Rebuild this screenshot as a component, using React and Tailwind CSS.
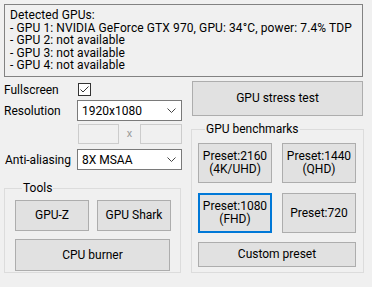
import React from "react";

function Btn({ className = "", focused = false, children }) {
  return (
    <div
      className={`flex flex-col items-center justify-center whitespace-nowrap bg-[#e1e1e1] text-center leading-[13px] ${
        focused ? "border-2 border-[#0078d7]" : "border border-[#adadad]"
      } ${className}`}
    >
      {children}
    </div>
  );
}

function Chevron() {
  return (
    <svg width="9" height="6" viewBox="0 0 9 6" className="ml-auto mr-[5px]">
      <path d="M0.5 0.5 L4.5 4.5 L8.5 0.5" fill="none" stroke="#444" strokeWidth="1" />
    </svg>
  );
}

function Select({ value }) {
  return (
    <div className="flex h-[21px] w-[105px] items-center border border-[#7a7a7a] bg-white pl-[4px]">
      <span>{value}</span>
      <Chevron />
    </div>
  );
}

function Group({ title, className = "", children }) {
  return (
    <fieldset className={`border border-[#dcdcdc] ${className}`}>
      <legend className="ml-[7px] px-[1px] leading-[16px]">{title}</legend>
      {children}
    </fieldset>
  );
}

export default function App() {
  return (
    <div className="h-[287px] w-[372px] overflow-hidden whitespace-nowrap bg-[#f0f0f0] pt-[4px] font-['Roboto',sans-serif] text-[12px] text-black">
      <div className="ml-[4px] h-[73px] w-[359px] border border-[#828282] pl-[5px] pt-[4px] leading-[12.6px] tracking-[0.1px]">
        <div>Detected GPUs:</div>
        <div>- GPU 1: NVIDIA GeForce GTX 970, GPU: 34°C, power: 7.4% TDP</div>
        <div>- GPU 2: not available</div>
        <div>- GPU 3: not available</div>
        <div>- GPU 4: not available</div>
      </div>

      <div className="ml-[4px] flex">
        <div className="w-[178px]">
          <div className="mt-[3px] flex h-[19px] items-center">
            <span className="w-[74px]">Fullscreen</span>
            <div className="flex h-[13px] w-[13px] items-center justify-center border border-[#333] bg-white">
              <svg width="11" height="11" viewBox="0 0 11 11">
                <path d="M1.5 5.5 L4 8 L9.5 2.5" fill="none" stroke="#333" strokeWidth="1" />
              </svg>
            </div>
          </div>
          <div className="mt-[1px] flex items-center">
            <span className="w-[73px]">Resolution</span>
            <Select value="1920x1080" />
          </div>
          <div className="mt-[3px] flex h-[20px] items-center pl-[74px]">
            <div className="h-[20px] w-[41px] border border-[#cccccc]" />
            <span className="w-[22px] text-center text-[11px] text-[#9a9a9a]">x</span>
            <div className="h-[20px] w-[42px] border border-[#cccccc]" />
          </div>
          <div className="mt-[5px] flex items-center">
            <span className="w-[73px] pl-[1px]">Anti-aliasing</span>
            <Select value="8X MSAA" />
          </div>
          <Group title="Tools" className="mt-[10px] h-[93px] w-[177px] pl-[10px]">
            <div className="mt-[4px] flex gap-[8px]">
              <Btn className="h-[31px] w-[74px]">GPU-Z</Btn>
              <Btn className="h-[31px] w-[74px]">GPU Shark</Btn>
            </div>
            <Btn className="mt-[8px] h-[32px] w-[155px]">CPU burner</Btn>
          </Group>
        </div>

        <div className="ml-[9px] w-[173px]">
          <Btn className="ml-[1px] mt-[4px] h-[35px] w-[171px]">GPU stress test</Btn>
          <Group title="GPU benchmarks" className="mt-[5px] h-[152px] w-[173px] pl-[6px]">
            <div className="mt-[6px] flex gap-[10px]">
              <Btn className="h-[40px] w-[74px]">
                <span>Preset:2160</span>
                <span>(4K/UHD)</span>
              </Btn>
              <Btn className="h-[40px] w-[74px]">
                <span>Preset:1440</span>
                <span>(QHD)</span>
              </Btn>
            </div>
            <div className="mt-[10px] flex gap-[10px]">
              <Btn focused className="h-[40px] w-[74px]">
                <span>Preset:1080</span>
                <span>(FHD)</span>
              </Btn>
              <Btn className="h-[40px] w-[74px]">Preset:720</Btn>
            </div>
            <Btn className="mt-[9px] h-[25px] w-[158px]">Custom preset</Btn>
          </Group>
        </div>
      </div>
    </div>
  );
}
